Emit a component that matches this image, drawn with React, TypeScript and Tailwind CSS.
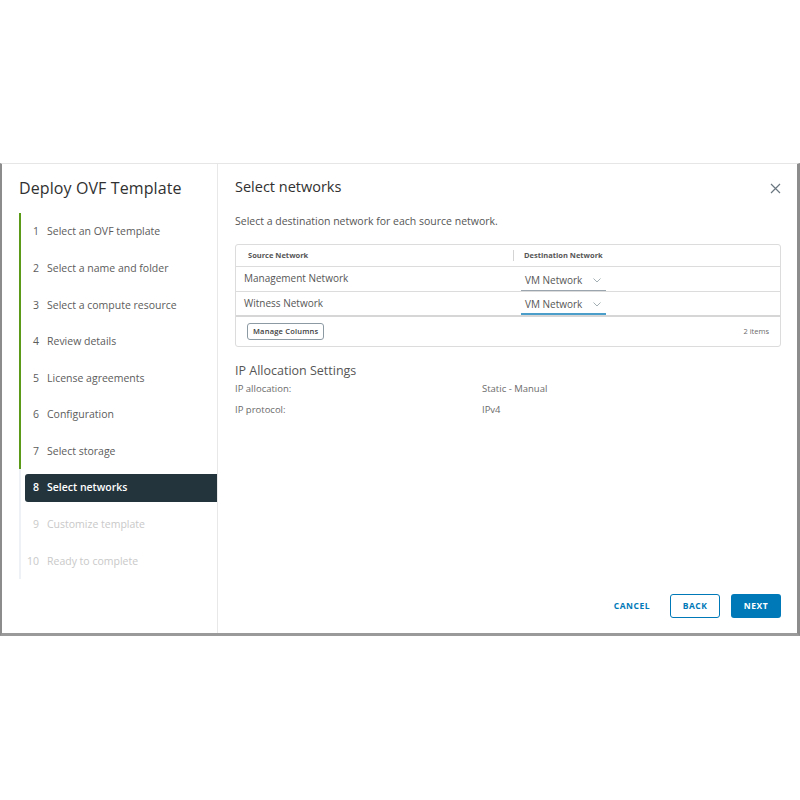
import React from 'react';

const steps = [
  'Select an OVF template',
  'Select a name and folder',
  'Select a compute resource',
  'Review details',
  'License agreements',
  'Configuration',
  'Select storage',
  'Select networks',
  'Customize template',
  'Ready to complete',
];

const ACTIVE = 7;

const networks = ['Management Network', 'Witness Network'];

const Chevron = () => (
  <svg width="8" height="5" viewBox="0 0 8 5" fill="none" stroke="#9aa5ad" strokeWidth="0.9">
    <path d="M0.5 0.5 L4 4 L7.5 0.5" />
  </svg>
);

export default function App() {
  return (
    <div
      className="w-[800px] h-[800px] bg-white pt-[163px]"
      style={{ fontFamily: '"Open Sans", "Liberation Sans", sans-serif' }}
    >
      <div className="flex h-[473px] border-l-2 border-r-[3px] border-b-[3px] border-t border-l-[#8c8c8c] border-r-[#8c8c8c] border-b-[#9a9a9a] border-t-[#e6e6e6] bg-white">
        {/* wizard steps */}
        <div className="w-[216px] border-r border-[#e8e8e8] flex flex-col">
          <h1 className="pl-[17px] pt-[12px] h-[49px] text-[16px] text-[#313131] tracking-[0.1px]">
            Deploy OVF Template
          </h1>
          <ul className="pl-[17px]">
            {steps.map((s, i) => {
              const done = i < ACTIVE;
              const active = i === ACTIVE;
              return (
                <li
                  key={s}
                  className={`h-[36.6px] flex items-center border-l-2 ${done ? 'border-[#5a9a18]' : 'border-[#eef2f6]'}`}
                >
                  {active ? (
                    <div className="ml-[4px] flex-1 h-[28px] mt-[1px] flex items-center bg-[#23343d] rounded-l-[3px] text-white font-semibold text-[10.5px]">
                      <span className="w-[14px] text-right">{i + 1}</span>
                      <span className="ml-[8px]">{s}</span>
                    </div>
                  ) : (
                    <div
                      className={`ml-[4px] mt-[2px] flex items-center text-[10.5px] ${done ? 'text-[#5c5c5c]' : 'text-[#c9c9c9]'}`}
                    >
                      <span className="w-[14px] text-right">{i + 1}</span>
                      <span className="ml-[8px]">{s}</span>
                    </div>
                  )}
                </li>
              );
            })}
          </ul>
        </div>

        {/* content */}
        <div className="flex-1 flex flex-col pl-[17px] pr-[16px]">
          <div className="flex items-start justify-between pt-[12px] h-[46px]">
            <h2 className="text-[14.5px] text-[#313131]">Select networks</h2>
            <svg width="11" height="11" viewBox="0 0 11 11" stroke="#6b7780" strokeWidth="1.2" className="mt-[7px]">
              <path d="M1 1 L10 10 M10 1 L1 10" />
            </svg>
          </div>
          <p className="mt-[4px] text-[10.5px] text-[#565656]">
            Select a destination network for each source network.
          </p>

          <div className="mt-[14px] border border-[#dcdcdc] rounded-[3px]">
            <div className="flex h-[22px] items-center border-b border-[#dcdcdc] text-[7.5px] font-bold text-[#565656]">
              <div className="w-[278px] pl-[12px] flex items-center justify-between">
                <span>Source Network</span>
                <span className="w-px h-[11px] bg-[#d4d4d4]" />
              </div>
              <div className="pl-[10px]">Destination Network</div>
            </div>
            {networks.map((n, i) => (
              <div
                key={n}
                className={`flex h-[25px] items-center ${i === networks.length - 1 ? 'border-b-2 border-[#d6d6d6]' : 'border-b border-[#dcdcdc]'}`}
              >
                <div className="w-[277px] pl-[8px] text-[10px] text-[#565656]">{n}</div>
                <div
                  className={`ml-[8px] w-[85px] h-[19px] mt-[5px] flex items-center justify-between pl-[4px] pr-[5px] border-b ${i === 1 ? 'border-[#4a9ec9] border-b-2' : 'border-[#9aa5ad]'}`}
                >
                  <span className="text-[10px] text-[#565656]">VM Network</span>
                  <Chevron />
                </div>
              </div>
            ))}
            <div className="flex h-[29px] items-center justify-between pl-[11px] pr-[11px]">
              <button className="h-[17px] px-[5px] border border-[#8c9aa3] rounded-[3px] text-[7.5px] font-semibold text-[#3d3d3d] tracking-[0.2px]">
                Manage Columns
              </button>
              <span className="text-[7.5px] text-[#6b6b6b]">2 items</span>
            </div>
          </div>

          <h3 className="mt-[15px] text-[12.5px] text-[#565656]">IP Allocation Settings</h3>
          <div className="mt-[1px] grid grid-cols-[247px_1fr] gap-y-[7px] text-[9.5px] text-[#6b6b6b]">
            <span>IP allocation:</span>
            <span>Static - Manual</span>
            <span>IP protocol:</span>
            <span>IPv4</span>
          </div>

          <div className="mt-auto mb-[15px] flex items-center justify-end gap-[11px]">
            <button className="h-[24px] px-[9px] text-[8.5px] font-bold tracking-[0.5px] text-[#0079b8]">
              CANCEL
            </button>
            <button className="h-[24px] w-[50px] border border-[#0079b8] rounded-[3px] text-[8.5px] font-bold tracking-[0.5px] text-[#0079b8]">
              BACK
            </button>
            <button className="h-[24px] w-[50px] bg-[#0079b8] rounded-[3px] text-[8.5px] font-bold tracking-[0.5px] text-white">
              NEXT
            </button>
          </div>
        </div>
      </div>
    </div>
  );
}
